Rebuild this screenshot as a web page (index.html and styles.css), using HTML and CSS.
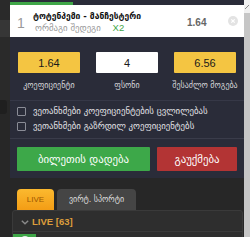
FILE: index.html
```html
<!DOCTYPE html>
<html>
<head>
<meta charset="utf-8">
<link rel="stylesheet" href="styles.css">
</head>
<body>
<div class="page">
  <div class="side">
    <div class="side-a"></div>
    <div class="side-b"></div>
    <div class="side-c"></div>
    <div class="side-d"></div>
  </div>
  <div class="main">
    <div class="slip">
      <div class="progress"><div class="progress-fill"></div></div>
      <div class="card">
        <div class="num">1</div>
        <div class="info">
          <div class="title">ტოტენჰემი - მანჩესტერი</div>
          <div class="sub">ორმაგი შედეგი <span class="pick">X2</span></div>
        </div>
        <div class="odd">1.64</div>
        <div class="close"><svg width="10" height="10" viewBox="0 0 10 10"><circle cx="5" cy="5" r="5" fill="#e3e3e3"/><path d="M3.3 3.3L6.7 6.7M6.7 3.3L3.3 6.7" stroke="#fff" stroke-width="1.2"/></svg></div>
      </div>
      <div class="fields">
        <div class="field">
          <div class="box yellow">1.64</div>
          <div class="label">კოეფიციენტი</div>
        </div>
        <div class="field">
          <div class="box white">4</div>
          <div class="label">ფსონი</div>
        </div>
        <div class="field">
          <div class="box yellow">6.56</div>
          <div class="label">შესაძლო მოგება</div>
        </div>
      </div>
      <div class="checks">
        <label class="check"><span class="cb"></span>ვეთანხმები კოეფიციენტების ცვლილებას</label>
        <label class="check"><span class="cb"></span>ვეთანხმები გაზრდილ კოეფიციენტებს</label>
      </div>
      <div class="actions">
        <div class="btn green">ბილეთის დადება</div>
        <div class="btn red">გაუქმება</div>
      </div>
    </div>
    <div class="tabs">
      <div class="tab live">LIVE</div>
      <div class="tab virt">ვირტ. სპორტი</div>
    </div>
    <div class="list">
      <div class="list-head"><svg class="chev" width="8" height="5" viewBox="0 0 8 5"><path d="M0.8 0.8L4 3.8L7.2 0.8" fill="none" stroke="#8a8a8a" stroke-width="1.4"/></svg><span>LIVE [63]</span></div>
      <div class="list-row"><div class="sport"><span class="ball"></span></div></div>
    </div>
  </div>
  <div class="scroll">
    <div class="scroll-btn"><svg width="6" height="6" viewBox="0 0 6 6"><path d="M1 5L5 1" stroke="#888" stroke-width="1"/></svg></div>
    <div class="scroll-track"></div>
  </div>
</div>
</body>
</html>
```
FILE: styles.css
```css
* { box-sizing: border-box; }
html, body { margin: 0; padding: 0; }
body {
  background: #272727;
  font-family: "Liberation Sans", "DejaVu Sans", sans-serif;
  width: 250px;
  height: 237px;
  overflow: hidden;
}
.page { display: flex; height: 237px; }
.side { width: 10px; display: flex; flex-direction: column; }
.side-a { height: 20px; background: #2a2a2a; }
.side-b { height: 17px; background: #363636; }
.side-c { height: 63px; background: #2a2a2a; }
.side-d { height: 14px; background: #1f1f1f; border-radius: 0 3px 3px 0; width: 7px; }
.main { width: 234px; display: flex; flex-direction: column; }
.slip { background: #2a2c39; padding-bottom: 7px; }
.progress { height: 5px; padding-top: 2px; }
.progress-fill { width: 63px; height: 3px; background: #3fa648; }
.card {
  background: #fff;
  height: 32px;
  display: flex;
  align-items: center;
  padding: 0 6px 0 7px;
}
.num { width: 16px; font-size: 14px; color: #9a9a9a; padding-top: 3px; }
.info { flex: 1; display: flex; flex-direction: column; padding-top: 1px; white-space: nowrap; }
.title { font-family: "DejaVu Sans", sans-serif; font-weight: bold; font-size: 8.5px; color: #111; line-height: 12px; }
.sub { font-family: "DejaVu Sans", sans-serif; font-size: 8.8px; color: #9a9a9a; line-height: 11px; padding-left: 2px; }
.pick { font-family: "Liberation Sans", sans-serif; color: #3fa648; font-size: 9.5px; margin-left: 9px; }
.odd { font-size: 10px; color: #666; width: 41px; padding-top: 3px; font-weight: bold; }
.close { width: 10px; height: 10px; display: flex; margin-right: 0; }
.fields {
  display: flex;
  gap: 16px;
  padding: 15px 8px 0 8px;
  height: 64px;
  border-bottom: 1px solid #363847;
}
.field { width: 62px; display: flex; flex-direction: column; align-items: center; }
.box {
  width: 62px;
  height: 21px;
  display: flex;
  align-items: center;
  justify-content: center;
  font-size: 11px;
  color: #1a1a1a;
  border-radius: 1px;
}
.yellow { background: #f4c542; }
.white { background: #fff; }
.label {
  margin-top: 8px;
  font-family: "DejaVu Sans", sans-serif;
  font-size: 8px;
  color: #d4d4d8;
  white-space: nowrap;
}
.checks { display: flex; flex-direction: column; gap: 5px; padding: 5px 0 7px 7px; border-bottom: 1px solid #3a3c4a; }
.check {
  display: flex;
  align-items: center;
  gap: 7px;
  font-family: "DejaVu Sans", sans-serif;
  font-size: 8.8px;
  color: #e0e0e4;
  height: 10px;
  white-space: nowrap;
}
.cb { width: 9px; height: 9px; border: 1px solid #8a8c96; border-radius: 1px; flex: none; }
.actions { display: flex; gap: 7px; padding: 8px 7px 0 7px; }
.btn {
  height: 24px;
  display: flex;
  align-items: center;
  justify-content: center;
  font-family: "DejaVu Sans", sans-serif;
  font-size: 10.8px;
  color: #fff;
  border-radius: 1px;
}
.green { width: 133px; background: #3da849; }
.red { width: 80px; background: #b33434; }
.tabs { display: flex; gap: 3px; padding: 11px 0 0 7px; height: 32px; }
.tab {
  height: 21px;
  display: flex;
  align-items: center;
  justify-content: center;
  border-radius: 4px 4px 0 0;
}
.live {
  width: 37px;
  background: linear-gradient(#fbb92f, #f39d15);
  color: #9c5800;
  font-size: 8px;
}
.virt {
  width: 79px;
  background: #454545;
  color: #dcdcdc;
  font-family: "DejaVu Sans", sans-serif;
  font-size: 8px;
}
.list {
  margin: 0 1px 0 2px;
  background: #2e2e2e;
  border: 1px solid #3a3a3a;
  border-radius: 3px 3px 0 0;
  flex: 1;
}
.list-head {
  height: 21px;
  display: flex;
  align-items: center;
  gap: 3px;
  padding-left: 8px;
  color: #dc9d3c;
  font-size: 9.5px;
  font-weight: bold;
  border-bottom: 1px solid #3a3a3a;
}
.chev { margin-top: 2px; }
.list-row { padding-top: 2px; }
.sport { width: 23px; height: 8px; background: #3fa648; display: flex; justify-content: center; }
.ball { width: 8px; height: 8px; border-radius: 50%; background: #e8e8e8; margin-top: 2px; }
.scroll { width: 6px; display: flex; flex-direction: column; }
.scroll-btn { height: 13px; display: flex; align-items: center; justify-content: center; background: #f1f1f1; }
.scroll-track { flex: 1; background: #c6c6c6; }
```
